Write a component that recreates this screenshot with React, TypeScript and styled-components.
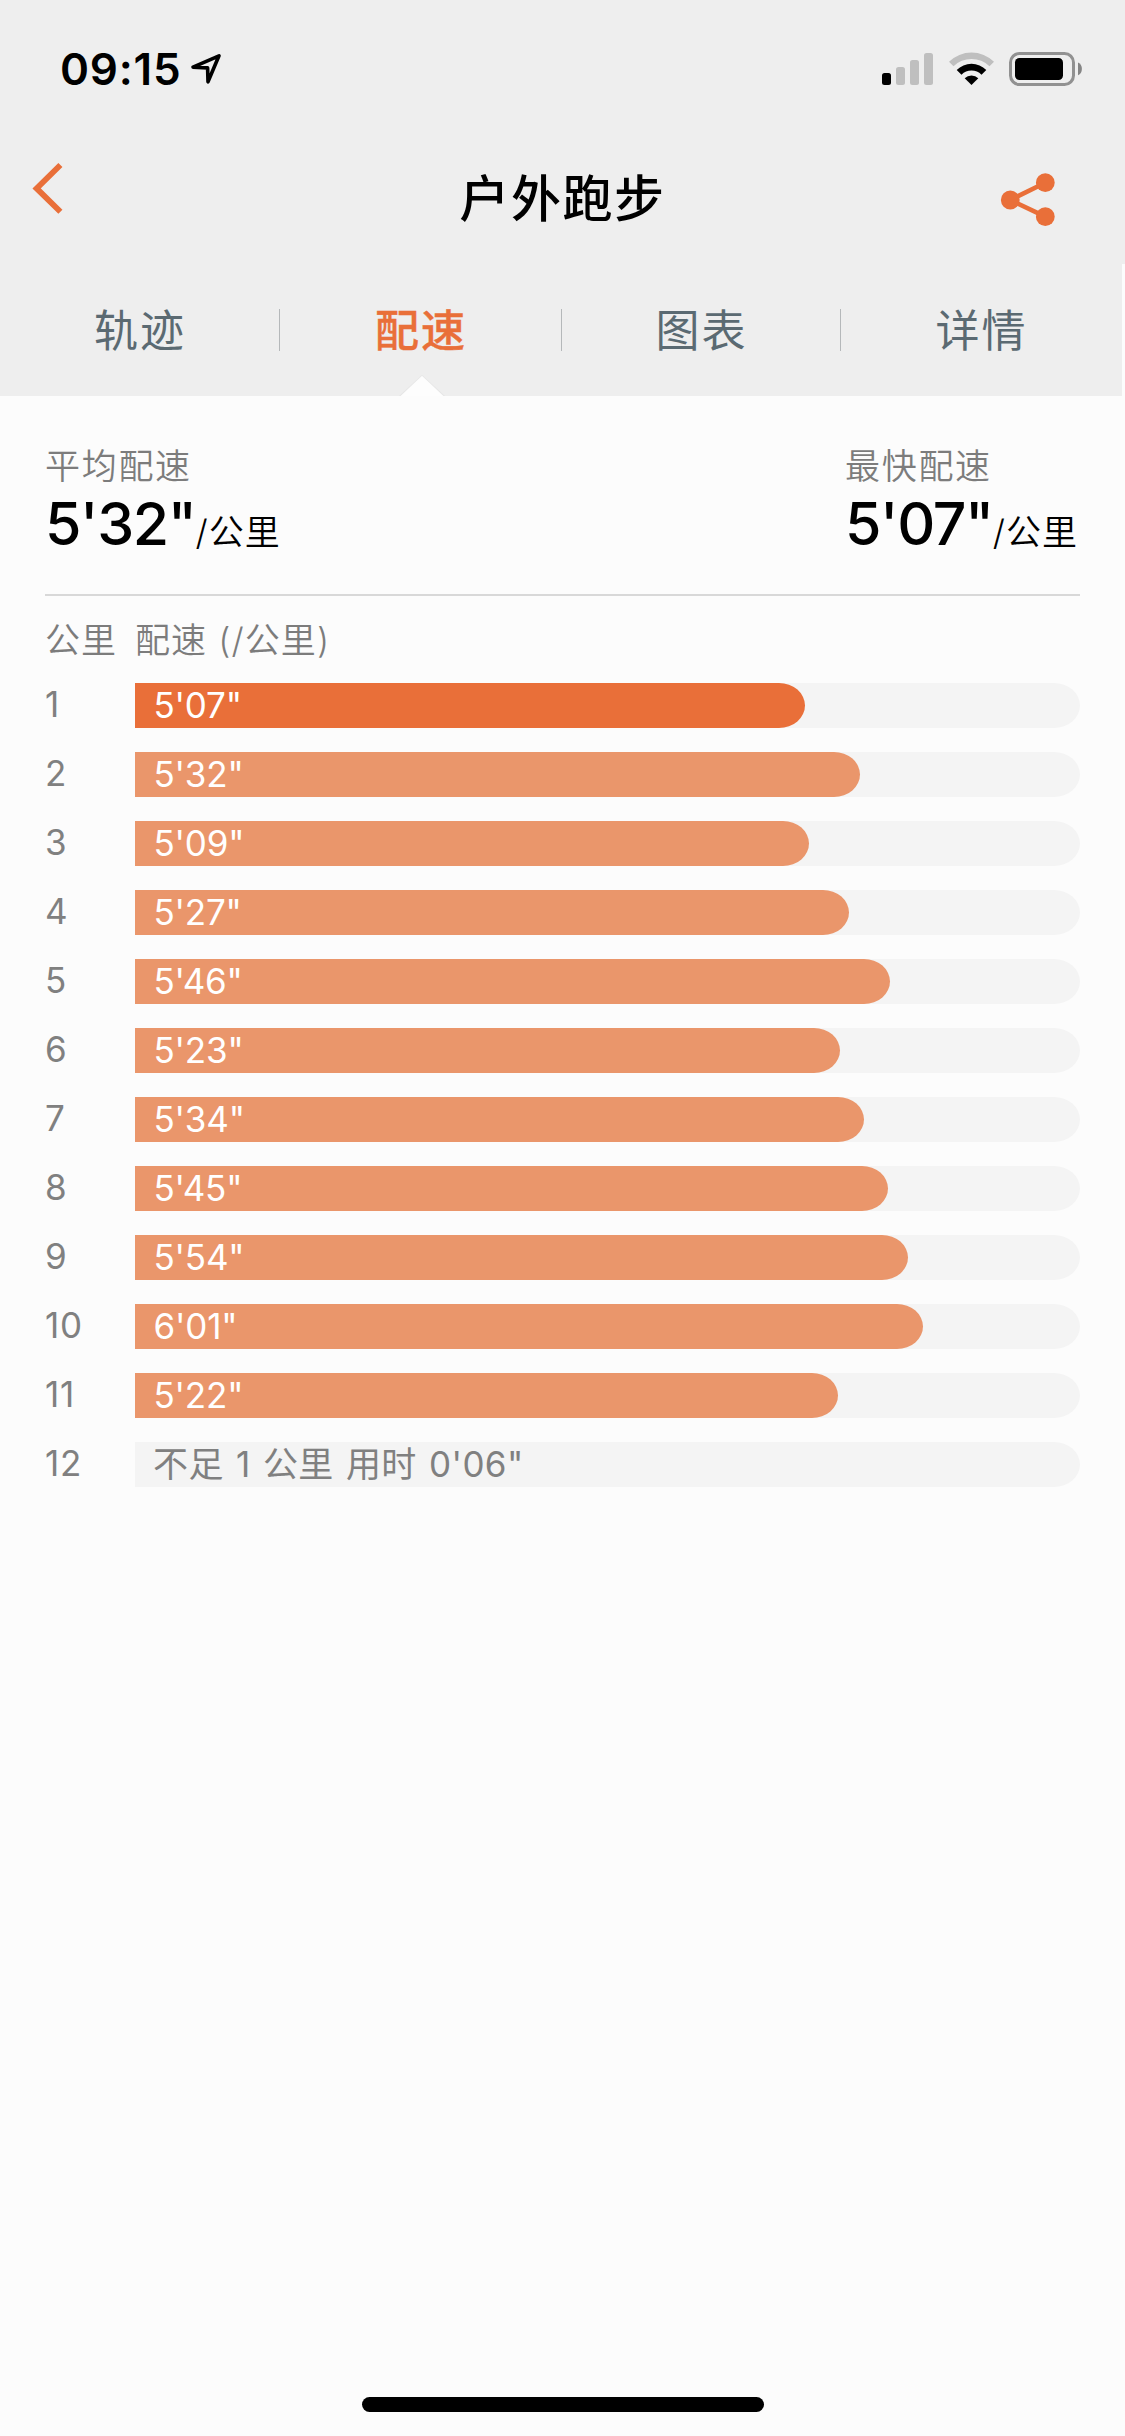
import React from "react";
import styled, { createGlobalStyle } from "styled-components";

const ORANGE = "#e96f39";

const Global = createGlobalStyle`
  body {
    margin: 0;
    background: #fcfcfc;
    font-family: Inter, "Noto Sans CJK SC", sans-serif;
    font-variant-ligatures: none;
    font-feature-settings: "calt" 0;
  }
`;

const Screen = styled.div`
  display: flex;
  flex-direction: column;
  width: 1125px;
  height: 2436px;
  background: #fcfcfc;
  overflow: hidden;
`;

const StatusBar = styled.header`
  display: flex;
  justify-content: space-between;
  box-sizing: border-box;
  height: 132px;
  padding: 48px 42px 0 60px;
  background: #eee;
`;

const StatusGroup = styled.div<{ $gap: number }>`
  display: flex;
  align-items: center;
  height: 42px;
  gap: ${(p) => p.$gap}px;
`;

const Clock = styled.span`
  font-size: 44px;
  font-weight: 600;
  line-height: 42px;
  letter-spacing: 0.8px;
  color: #000;
`;

const NavBar = styled.nav`
  display: grid;
  grid-template-columns: 130px 1fr 130px;
  height: 132px;
  background: #eee;
`;

const IconButton = styled.button<{ $pad: string }>`
  display: flex;
  justify-content: flex-start;
  align-items: flex-start;
  border: 0;
  background: none;
  padding: ${(p) => p.$pad};
`;

const Title = styled.h1`
  margin: 0;
  text-align: center;
  font-size: 50px;
  font-weight: 500;
  letter-spacing: 1.6px;
  line-height: 135px;
  color: #000;
`;

const Tabs = styled.div`
  display: grid;
  grid-template-columns: 280px 282px 279px 281px;
  width: 1122px;
  height: 132px;
  background: #eee;
`;

const Tab = styled.div<{ $active?: boolean }>`
  position: relative;
  display: flex;
  align-items: center;
  justify-content: center;
  box-sizing: border-box;
  padding-bottom: 4px;
  font-size: 44px;
  letter-spacing: 2px;
  font-weight: ${(p) => (p.$active ? 500 : 400)};
  -webkit-text-stroke: ${(p) => (p.$active ? "0.4px" : "0")};
  color: ${(p) => (p.$active ? ORANGE : "#5b6a72")};

  &:not(:first-child)::before {
    content: "";
    position: absolute;
    left: -1px;
    top: 45px;
    width: 1px;
    height: 42px;
    background: #b5b8ba;
  }
`;

const Pointer = styled.svg`
  position: absolute;
  left: 119px;
  bottom: 0;
`;

const Content = styled.main`
  display: flex;
  flex-direction: column;
  flex: 1;
  padding: 44px 45px 0;
`;

const Summary = styled.section`
  display: flex;
  justify-content: space-between;
  height: 154px;
  border-bottom: 2px solid #d8d8d8;
`;

const Stat = styled.div<{ $width: number }>`
  display: flex;
  flex-direction: column;
  width: ${(p) => p.$width}px;
  white-space: nowrap;
`;

const StatLabel = styled.span`
  font-size: 35px;
  font-weight: 350;
  line-height: 52px;
  letter-spacing: 1.7px;
  color: #7c7c7c;
`;

const StatValue = styled.div`
  display: flex;
  align-items: baseline;
  line-height: 64px;
  color: #000;
`;

const Figure = styled.span`
  font-size: 59px;
  font-weight: 500;
  letter-spacing: -1.4px;
`;

const Unit = styled.span`
  font-size: 35px;
  font-weight: 350;
  letter-spacing: 1px;
`;

const Columns = styled.div`
  display: grid;
  grid-template-columns: 90px 1fr;
  height: 87px;
  line-height: 88px;
  font-size: 35px;
  font-weight: 350;
  letter-spacing: 1.1px;
  color: #7c7c7c;
`;

const Splits = styled.div`
  display: flex;
  flex-direction: column;
  gap: 24px;
`;

const Split = styled.div`
  display: grid;
  grid-template-columns: 90px 1fr;
  height: 45px;
  line-height: 45px;
  font-size: 35px;
  color: #808080;
`;

const Index = styled.span`
  line-height: 43px;
  letter-spacing: 0.8px;
`;

const Track = styled.div`
  display: flex;
  border-radius: 0 26px 26px 0 / 0 22.5px 22.5px 0;
  background: #f4f4f4;
`;

const Fill = styled.div<{ $best: boolean }>`
  box-sizing: border-box;
  padding-left: 18.5px;
  border-radius: 0 26px 26px 0 / 0 22.5px 22.5px 0;
  background: ${(p) => (p.$best ? ORANGE : "#ea966b")};
  letter-spacing: -0.2px;
  color: #fff;
`;

const Remainder = styled.span`
  padding-left: 18px;
  letter-spacing: 0.4px;
  word-spacing: 2px;
`;

const HomeIndicator = styled.div`
  align-self: center;
  width: 402px;
  height: 15px;
  margin-bottom: 24px;
  border-radius: 8px;
  background: #000;
`;

const BEST = 307;
const SCALE = 433;
const paces = [307, 332, 309, 327, 346, 323, 334, 345, 354, 361, 322];

const format = (s: number) =>
  `${Math.floor(s / 60)}'${String(s % 60).padStart(2, "0")}"`;

export default function App() {
  return (
    <Screen>
      <Global />
      <StatusBar>
        <StatusGroup $gap={9}>
          <Clock>09:15</Clock>
          <svg width="32" height="32" viewBox="0 0 32 32" fill="none" stroke="#000" strokeWidth="3.6" strokeLinejoin="round">
            <path d="M3 14.2 L29 2.8 L18 28.8 L17.6 14.9 Z" />
          </svg>
        </StatusGroup>
        <StatusGroup $gap={15}>
          <svg width="52" height="34" viewBox="0 0 52 34">
            <rect x="0" y="21" width="9" height="12" rx="2.5" fill="#000" />
            <rect x="14" y="15" width="9" height="18" rx="2.5" fill="#bfbfbf" />
            <rect x="28" y="8" width="9" height="25" rx="2.5" fill="#bfbfbf" />
            <rect x="42" y="1" width="9" height="32" rx="2.5" fill="#bfbfbf" />
          </svg>
          <svg width="45" height="34" viewBox="0.5 0 45 34">
            <path d="M0.5 9.8 A32 32 0 0 1 45.5 9.8 L41 14.3 A25.6 25.6 0 0 0 5 14.3 Z" fill="#bfbfbf" />
            <path d="M8.2 18 A20.8 20.8 0 0 1 37.8 18 L33 22.7 A14.2 14.2 0 0 0 13 22.7 Z" fill="#000" />
            <path d="M16.2 26.2 A9.8 9.8 0 0 1 29.8 26.2 L23 33 Z" fill="#000" />
          </svg>
          <svg width="74" height="34" viewBox="0 0 74 34">
            <rect x="1.5" y="1.5" width="63" height="31" rx="9" fill="none" stroke="#919191" strokeWidth="3" />
            <rect x="6" y="6" width="48" height="22" rx="4.5" fill="#000" />
            <path d="M69 10.6 C74.2 12.8 74.2 21 69 23.2 Z" fill="#858585" />
          </svg>
        </StatusGroup>
      </StatusBar>

      <NavBar>
        <IconButton $pad="30px 0 0 31px" aria-label="返回">
          <svg width="34" height="54" viewBox="0 0 34 54" fill="none" stroke={ORANGE} strokeWidth="5.8">
            <path d="M29.4 3 L5.6 26.4 L29.4 49.8" />
          </svg>
        </IconButton>
        <Title>户外跑步</Title>
        <IconButton $pad="40px 0 0 5px" aria-label="分享">
          <svg width="56" height="56" viewBox="0 0 56 56" fill={ORANGE}>
            <path d="M45.3 10.7 L10.3 28 L45.3 44.7" fill="none" stroke={ORANGE} strokeWidth="4.6" />
            <circle cx="10.3" cy="28" r="9.4" />
            <circle cx="45.3" cy="10.7" r="9.4" />
            <circle cx="45.3" cy="44.7" r="9.4" />
          </svg>
        </IconButton>
      </NavBar>

      <Tabs>
        <Tab>轨迹</Tab>
        <Tab $active>
          配速
          <Pointer width="46" height="21" viewBox="0 0 46 21">
            <path d="M0 21 L23 0 L46 21 Z" fill="#e6e6e6" />
            <path d="M1.5 21 L23 0.8 L44.5 21 Z" fill="#fdfdfd" />
          </Pointer>
        </Tab>
        <Tab>图表</Tab>
        <Tab>详情</Tab>
      </Tabs>

      <Content>
        <Summary>
          <Stat $width={300}>
            <StatLabel>平均配速</StatLabel>
            <StatValue>
              <Figure>{format(332)}</Figure>
              <Unit>/公里</Unit>
            </StatValue>
          </Stat>
          <Stat $width={235}>
            <StatLabel>最快配速</StatLabel>
            <StatValue>
              <Figure>{format(BEST)}</Figure>
              <Unit>/公里</Unit>
            </StatValue>
          </Stat>
        </Summary>

        <Columns>
          <span>公里</span>
          <span>配速 (/公里)</span>
        </Columns>

        <Splits>
          {paces.map((pace, i) => (
            <Split key={i}>
              <Index>{i + 1}</Index>
              <Track>
                <Fill $best={pace === BEST} style={{ width: `${(pace / SCALE) * 100}%` }}>
                  {format(pace)}
                </Fill>
              </Track>
            </Split>
          ))}
          <Split>
            <Index>{paces.length + 1}</Index>
            <Track>
              <Remainder>不足 1 公里 用时 {format(6)}</Remainder>
            </Track>
          </Split>
        </Splits>
      </Content>
      <HomeIndicator />
    </Screen>
  );
}
